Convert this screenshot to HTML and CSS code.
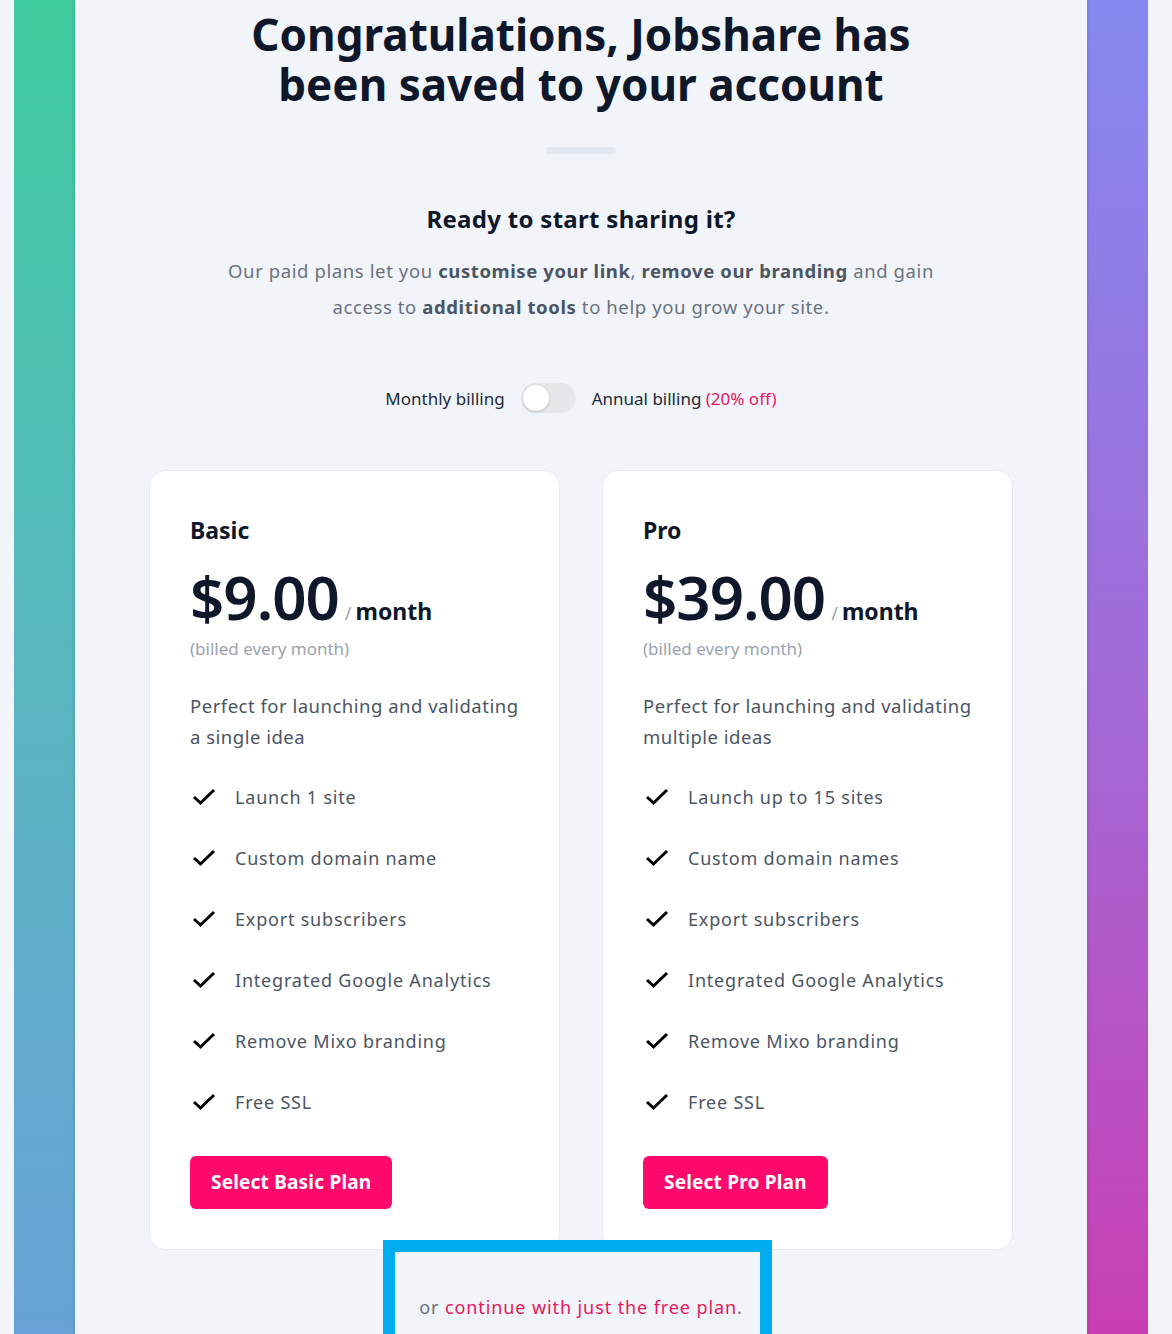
FILE: index.html
```html
<!DOCTYPE html>
<html>
<head>
	<meta charset="UTF-8">
	<title>Jobshare saved</title>
	<link rel="stylesheet" href="styles.css">
</head>
<body>
	<div id="moldura">
		<div id="painel">
			<h1 id="titulo">Congratulations, Jobshare has<br>been saved to your account</h1>

			<div id="divisor"></div>

			<h2 id="subtitulo">Ready to start sharing it?</h2>

			<p id="intro">Our paid plans let you <b>customise your link</b>, <b>remove our branding</b> and gain<br>access to <b>additional tools</b> to help you grow your site.</p>

			<div id="cobranca">
				<span>Monthly billing</span>
				<span class="chave"><span class="chave-botao"></span></span>
				<span>Annual billing <em>(20% off)</em></span>
			</div>

			<div id="planos">
				<div class="plano">
					<h3>Basic</h3>
					<div class="preco"><strong>$9.00</strong><i>/</i><span>month</span></div>
					<div class="periodo">(billed every month)</div>
					<p class="descricao">Perfect for launching and validating<br>a single idea</p>
					<ul class="recursos">
						<li><svg viewBox="0 0 24 18"><path d="M2 9 L8.5 15 L22 2"/></svg>Launch 1 site</li>
						<li><svg viewBox="0 0 24 18"><path d="M2 9 L8.5 15 L22 2"/></svg>Custom domain name</li>
						<li><svg viewBox="0 0 24 18"><path d="M2 9 L8.5 15 L22 2"/></svg>Export subscribers</li>
						<li><svg viewBox="0 0 24 18"><path d="M2 9 L8.5 15 L22 2"/></svg>Integrated Google Analytics</li>
						<li><svg viewBox="0 0 24 18"><path d="M2 9 L8.5 15 L22 2"/></svg>Remove Mixo branding</li>
						<li><svg viewBox="0 0 24 18"><path d="M2 9 L8.5 15 L22 2"/></svg>Free SSL</li>
					</ul>
					<a class="botao">Select Basic Plan</a>
				</div>

				<div class="plano">
					<h3>Pro</h3>
					<div class="preco"><strong>$39.00</strong><i>/</i><span>month</span></div>
					<div class="periodo">(billed every month)</div>
					<p class="descricao">Perfect for launching and validating<br>multiple ideas</p>
					<ul class="recursos">
						<li><svg viewBox="0 0 24 18"><path d="M2 9 L8.5 15 L22 2"/></svg>Launch up to 15 sites</li>
						<li><svg viewBox="0 0 24 18"><path d="M2 9 L8.5 15 L22 2"/></svg>Custom domain names</li>
						<li><svg viewBox="0 0 24 18"><path d="M2 9 L8.5 15 L22 2"/></svg>Export subscribers</li>
						<li><svg viewBox="0 0 24 18"><path d="M2 9 L8.5 15 L22 2"/></svg>Integrated Google Analytics</li>
						<li><svg viewBox="0 0 24 18"><path d="M2 9 L8.5 15 L22 2"/></svg>Remove Mixo branding</li>
						<li><svg viewBox="0 0 24 18"><path d="M2 9 L8.5 15 L22 2"/></svg>Free SSL</li>
					</ul>
					<a class="botao">Select Pro Plan</a>
				</div>
			</div>

			<p id="gratis">or <a>continue with just the free plan</a>.</p>
		</div>
	</div>

	<div id="destaque"></div>
</body>
</html>
```

FILE: styles.css
```css
* {
	box-sizing: border-box;
}

body {
	margin: 0;
	background-color: #f1f4f8;
	font-family: "Noto Sans", "Open Sans", sans-serif;
	color: #111827;
	position: relative;
	height: 1334px;
	overflow: hidden;
}

#moldura {
	margin: 0 24px 0 14px;
	padding: 0 61px;
	height: 1334px;
	background:
		linear-gradient(to bottom, #3fcc9f, #5bb4c2 55%, #68a2d8) left top / 50% 100% no-repeat,
		linear-gradient(to bottom, #8589ef, #a468d6 55%, #c93fb3) right top / 50% 100% no-repeat;
}

#painel {
	height: 100%;
	background-color: #f1f4f9;
	box-shadow: 0 0 4px rgba(0, 0, 0, .18);
	text-align: center;
	padding-top: 9px;
}

#titulo {
	margin: 0;
	font-size: 44px;
	line-height: 50px;
	font-weight: 700;
	color: #0f172a;
}

#divisor {
	width: 70px;
	height: 7px;
	border-radius: 4px;
	background-color: #e2e8f0;
	margin: 38px auto 0;
}

#subtitulo {
	margin: 50px 0 0;
	font-size: 24px;
	line-height: 30px;
	font-weight: 700;
	letter-spacing: .3px;
	color: #0f172a;
}

#intro {
	margin: 19px 0 0;
	font-size: 18.5px;
	line-height: 36px;
	letter-spacing: .6px;
	color: #6b7280;
}

#intro b {
	color: #4b5563;
}

#cobranca {
	margin-top: 58px;
	display: flex;
	align-items: center;
	justify-content: center;
	gap: 16px;
	font-size: 17px;
	color: #1f2937;
}

#cobranca em {
	font-style: normal;
	color: #e8175d;
}

.chave {
	width: 55px;
	height: 30px;
	border-radius: 15px;
	background-color: #e5e7eb;
	padding: 2px;
}

.chave-botao {
	display: block;
	width: 26px;
	height: 26px;
	border-radius: 50%;
	background-color: #fff;
	box-shadow: 0 1px 3px rgba(0, 0, 0, .2);
}

#planos {
	margin: 57px auto 0;
	width: 864px;
	display: flex;
	gap: 42px;
	text-align: left;
}

.plano {
	flex: 1;
	background-color: #fff;
	border: 1px solid #e8ecf2;
	border-radius: 16px;
	padding: 41px 40px 40px;
}

.plano h3 {
	margin: 0;
	font-size: 23px;
	line-height: 36px;
	font-weight: 700;
	color: #0f172a;
}

.preco {
	margin-top: 16px;
	display: flex;
	align-items: baseline;
	color: #0f172a;
}

.preco strong {
	font-size: 60px;
	line-height: 66px;
	font-weight: 600;
	letter-spacing: -1px;
}

.preco i {
	font-style: normal;
	font-size: 18px;
	color: #9ca3af;
	margin: 0 4px 0 6px;
}

.preco span {
	font-size: 23px;
	font-weight: 700;
}

.periodo {
	margin-top: 7px;
	font-size: 17px;
	line-height: 24px;
	color: #9ca3af;
}

.descricao {
	margin: 29px 0 0;
	font-size: 18.5px;
	line-height: 31px;
	color: #4b5563;
	letter-spacing: .5px;
}

.recursos {
	list-style: none;
	margin: 14px 0 0;
	padding: 0;
}

.recursos li {
	display: flex;
	align-items: center;
	height: 61px;
	font-size: 18px;
	color: #4b5563;
	letter-spacing: .8px;
}

.recursos svg {
	width: 24px;
	height: 18px;
	margin: 0 19px 0 2px;
	fill: none;
	stroke: #000;
	stroke-width: 3;
}

.botao {
	display: inline-block;
	margin-top: 24px;
	padding: 0 21px;
	height: 53px;
	line-height: 53px;
	border-radius: 6px;
	background-color: #ff0a6c;
	color: #fff;
	font-size: 19px;
	font-weight: 700;
	letter-spacing: .2px;
}

#gratis {
	margin: 45px 0 0;
	font-size: 18px;
	color: #6b7280;
	letter-spacing: .9px;
}

#gratis a {
	color: #e8175d;
}

#destaque {
	position: absolute;
	left: 383px;
	top: 1240px;
	width: 389px;
	height: 106px;
	border: 12px solid #00aeef;
	pointer-events: none;
}
```
